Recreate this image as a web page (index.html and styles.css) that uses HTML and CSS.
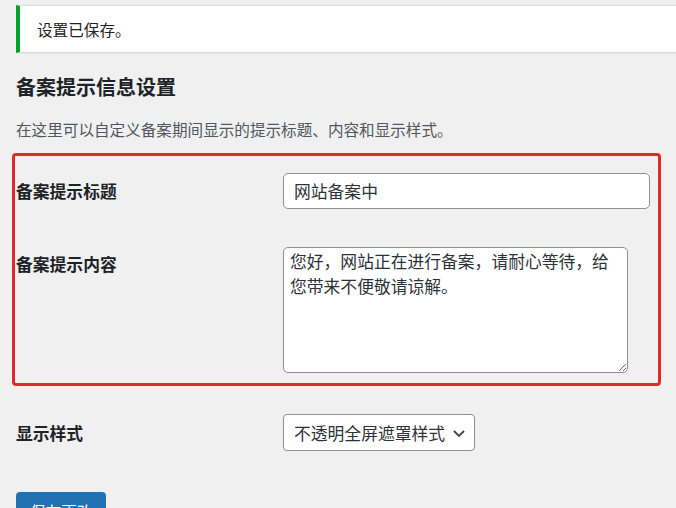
FILE: index.html
```html
<!DOCTYPE html>
<html lang="zh-CN">

<head>
    <meta charset="UTF-8">
    <meta name="viewport" content="width=device-width, initial-scale=1.0">
    <link rel="stylesheet" href="styles.css">
    <title>备案提示信息设置</title>
</head>

<body>
    <div class="wrap">
        <div class="notice">
            <p>设置已保存。</p>
        </div>

        <h2>备案提示信息设置</h2>
        <p class="desc">在这里可以自定义备案期间显示的提示标题、内容和显示样式。</p>

        <form class="settings">
            <div class="fields">
                <label for="beian-title" class="row-label">备案提示标题</label>
                <input type="text" id="beian-title" class="regular-text" value="网站备案中">

                <label for="beian-content" class="row-label top">备案提示内容</label>
                <textarea id="beian-content" class="large-text">您好，网站正在进行备案，请耐心等待，给您带来不便敬请谅解。</textarea>
            </div>

            <div class="style-row">
                <label class="row-label">显示样式</label>
                <div class="select">
                    <span>不透明全屏遮罩样式</span>
                    <svg width="16" height="16" viewBox="0 0 16 16">
                        <path d="M3 6 L8 11 L13 6" fill="none" stroke="#3c434a" stroke-width="1.8" />
                    </svg>
                </div>
            </div>

            <button type="submit" class="button-primary">保存更改</button>
        </form>
    </div>
</body>

</html>
```

FILE: styles.css
```css
* {
    margin: 0;
    padding: 0;
    box-sizing: border-box;
}

body {
    background-color: #f0f0f1;
    color: #1d2327;
    font-family: "Microsoft YaHei", "Noto Sans CJK SC", sans-serif;
    overflow: hidden;
}

.wrap {
    padding: 5px 0 0 16px;
}

.notice {
    height: 48px;
    margin-right: -20px;
    display: flex;
    align-items: center;
    background-color: white;
    border: 1px solid #dcdcde;
    border-left: 4px solid #00a32a;
    box-shadow: 0 1px 1px rgba(0, 0, 0, .04);

    p {
        padding-left: 17px;
        font-size: 15.6px;
        color: #1d2327;
    }
}

h2 {
    margin-top: 21px;
    font-size: 20px;
    line-height: 26px;
    font-weight: 700;
    color: #1d2327;
}

.desc {
    margin-top: 18px;
    font-size: 15.6px;
    line-height: 23px;
    color: #50575e;
}

.fields {
    margin: 12px 0 0 -4px;
    width: 649px;
    padding: 17px 0 10px 1px;
    border: 3px solid #e02a2a;
    border-radius: 4px;
    display: grid;
    grid-template-columns: 267px 367px;
    row-gap: 38px;
    align-items: center;
}

.row-label {
    font-size: 16.8px;
    font-weight: 700;
    line-height: 24px;
    color: #1d2327;
}

.row-label.top {
    align-self: start;
    padding-top: 5px;
}

input,
textarea {
    font-family: "Microsoft YaHei", "Noto Sans CJK SC", sans-serif;
    font-size: 16.8px;
    color: #2c3338;
    background-color: white;
    border: 1px solid #8c8f94;
    border-radius: 5px;
    outline: none;
}

.regular-text {
    height: 36px;
    width: 367px;
    padding: 0 10px;
}

.large-text {
    width: 345px;
    height: 126px;
    padding: 1px 6px;
    line-height: 25px;
    resize: vertical;
}

.style-row {
    margin-top: 28px;
    display: grid;
    grid-template-columns: 267px auto;
    align-items: center;
}

.select {
    width: 192px;
    height: 37px;
    padding: 0 7px 0 10px;
    display: flex;
    align-items: center;
    justify-content: space-between;
    background-color: white;
    border: 1px solid #8c8f94;
    border-radius: 4px;
    font-size: 16.8px;
    color: #2c3338;
}

.button-primary {
    margin-top: 41px;
    height: 38px;
    padding: 0 14px;
    border: none;
    border-radius: 4px;
    background-color: #2271b1;
    color: white;
    font-family: "Microsoft YaHei", "Noto Sans CJK SC", sans-serif;
    font-size: 15.6px;
    cursor: pointer;
}
```
